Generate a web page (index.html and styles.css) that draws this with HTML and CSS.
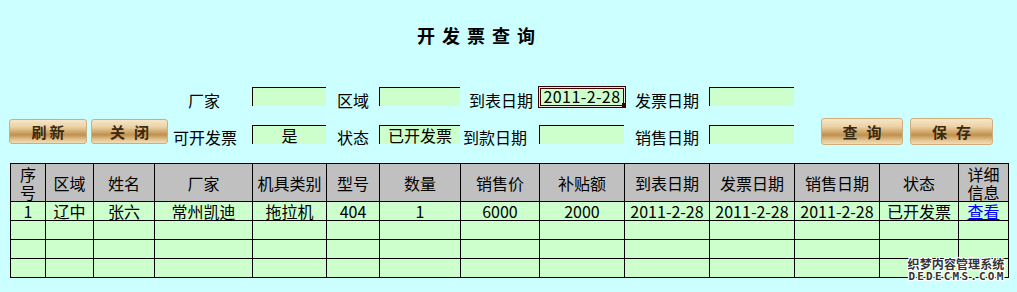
FILE: index.html
```html
<!DOCTYPE html>
<html lang="zh-CN">
<head>
<meta charset="utf-8">
<title>开发票查询</title>
<link rel="stylesheet" href="styles.css">
</head>
<body>
<div class="page">
  <h1 class="title">开发票查询</h1>
  <div class="form">
    <span class="lbl lbl-start lbl-a">厂家</span>
    <span class="field"></span>
    <span class="lbl lbl-c">区域</span>
    <span class="field"></span>
    <span class="lbl lbl-d">到表日期</span>
    <span class="field date">2011-2-28</span>
    <span class="lbl lbl-d">发票日期</span>
    <span class="field"></span>

    <div class="btns btns-left">
      <span class="btn btn-narrow w78">刷新</span>
      <span class="btn w77">关闭</span>
    </div>
    <span class="lbl lbl-b r2">可开发票</span>
    <span class="field">是</span>
    <span class="lbl lbl-c r2">状态</span>
    <span class="field">已开发票</span>
    <span class="lbl lbl-b r2">到款日期</span>
    <span class="field shift">&nbsp;</span>
    <span class="lbl lbl-d r2">销售日期</span>
    <span class="field"></span>
    <div class="btns btns-right">
      <span class="btn btn-tall w82">查询</span>
      <span class="btn btn-tall w83">保存</span>
    </div>
  </div>

  <table class="grid">
    <colgroup>
      <col class="c35"><col class="c48"><col class="c61"><col class="c98"><col class="c74">
      <col class="c53"><col class="c81"><col class="c79"><col class="c85"><col class="c85">
      <col class="c85"><col class="c85"><col class="c79"><col class="c50">
    </colgroup>
    <thead>
      <tr>
        <th>序<br>号</th><th>区域</th><th>姓名</th><th>厂家</th><th>机具类别</th>
        <th>型号</th><th>数量</th><th>销售价</th><th>补贴额</th><th>到表日期</th>
        <th>发票日期</th><th>销售日期</th><th>状态</th><th>详细<br>信息</th>
      </tr>
    </thead>
    <tbody>
      <tr>
        <td>1</td><td>辽中</td><td>张六</td><td>常州凯迪</td><td>拖拉机</td>
        <td>404</td><td>1</td><td>6000</td><td>2000</td><td>2011-2-28</td>
        <td>2011-2-28</td><td>2011-2-28</td><td>已开发票</td><td><a href="#" class="link">查看</a></td>
      </tr>
      <tr><td></td><td></td><td></td><td></td><td></td><td></td><td></td><td></td><td></td><td></td><td></td><td></td><td></td><td></td></tr>
      <tr><td></td><td></td><td></td><td></td><td></td><td></td><td></td><td></td><td></td><td></td><td></td><td></td><td></td><td></td></tr>
      <tr><td></td><td></td><td></td><td></td><td></td><td></td><td></td><td></td><td></td><td></td><td></td><td></td><td></td><td></td></tr>
    </tbody>
  </table>

  <div class="watermark">
    <div class="wm1">织梦内容管理系统</div>
    <div class="wm2">DEDECMS.COM</div>
  </div>
</div>
</body>
</html>
```

FILE: styles.css
```css
html, body {
  margin: 0;
  padding: 0;
}
body {
  background: #ccffff;
  font-family: "Noto Sans CJK SC", sans-serif;
  font-size: 16px;
  color: #000;
}
.page {
  position: relative;
  width: 1017px;
  height: 292px;
  overflow: hidden;
}
.title {
  margin: 26px 0 0 417px;
  font-size: 18px;
  line-height: 18px;
  font-weight: 700;
  letter-spacing: 7px;
}
.form {
  display: grid;
  grid-template-columns: 170px 82px 74px 53px 81px 78px 88px 83px 85px 223px;
  grid-template-rows: 22px 28px;
  row-gap: 10px;
  margin-top: 42px;
}
.lbl {
  align-self: end;
  justify-self: start;
  line-height: 16px;
  white-space: nowrap;
}
.lbl.r2 { margin-bottom: 1px; }
.lbl-start { grid-column: 2; }
.lbl-a { margin-left: 18px; }
.lbl-b { margin-left: 3px; }
.lbl-c { margin-left: 11px; }
.lbl-d { margin-left: 9px; }

.field {
  align-self: end;
  margin-bottom: 2px;
  height: 19px;
  box-sizing: border-box;
  background: #ccffcc;
  border-top: 1px solid #000;
  border-left: 1px solid #000;
  text-align: center;
  line-height: 18px;
  white-space: nowrap;
}
.field.shift {
  margin-left: 1px;
  width: 85px;
}
.field.date {
  position: relative;
  align-self: stretch;
  margin-bottom: 0;
  height: 22px;
  border: 1px solid #3c0000;
  box-shadow: inset 0 0 0 1px #f3e6e6, inset 0 0 0 2px #3c0000;
  line-height: 19px;
  letter-spacing: 0.4px;
}
.field.date::after {
  content: "";
  position: absolute;
  right: -1px;
  bottom: -1px;
  width: 4px;
  height: 5px;
  background: #3c0000;
}

.btns {
  display: flex;
  align-self: start;
}
.btns-left {
  grid-column: 1;
  gap: 4px;
  padding-left: 9px;
  margin-top: 1px;
}
.btns-right {
  gap: 7px;
  padding-left: 27px;
}
.btn {
  display: flex;
  align-items: center;
  justify-content: center;
  height: 25px;
  box-sizing: border-box;
  border: 1px solid #cfae7c;
  border-radius: 3px;
  background: linear-gradient(#f7e6c8 0%, #ecd2a6 30%, #c99c5c 58%, #bf904f 64%, #e4c692 86%, #f1ddb8 100%);
  font-size: 15px;
  font-weight: 700;
  color: #3b2a12;
  letter-spacing: 9px;
  text-indent: 9px;
}
.btn-narrow { letter-spacing: 3px; text-indent: 3px; }
.btn-tall { height: 27px; }
.w77 { width: 77px; }
.w78 { width: 78px; }
.w82 { width: 82px; }
.w83 { width: 83px; }

.grid {
  margin: 17px 0 0 10px;
  border-collapse: collapse;
  table-layout: fixed;
  width: 999px;
}
.c35 { width: 35px; }
.c48 { width: 48px; }
.c50 { width: 50px; }
.c53 { width: 53px; }
.c61 { width: 61px; }
.c74 { width: 74px; }
.c79 { width: 79px; }
.c81 { width: 81px; }
.c85 { width: 85px; }
.c98 { width: 98px; }
.grid th,
.grid td {
  border: 1px solid #000;
  padding: 0;
  text-align: center;
  white-space: nowrap;
  font-weight: 400;
}
.grid th {
  background: #c0c0c0;
  height: 37px;
  line-height: 18px;
}
.grid td {
  background: #ccffcc;
  height: 18px;
  line-height: 18px;
}
.link {
  color: #0000ff;
  text-decoration: underline;
}

.watermark {
  position: absolute;
  left: 906px;
  top: 256px;
  width: 100px;
  text-align: center;
  color: #333;
  font-weight: 700;
  text-shadow: 1px 0 0 #fff, -1px 0 0 #fff, 0 1px 0 #fff, 0 -1px 0 #fff, 1px 1px 0 #fff, -1px -1px 0 #fff, 1px -1px 0 #fff, -1px 1px 0 #fff;
}
.wm1 {
  font-size: 12px;
  line-height: 15px;
  letter-spacing: 0.1px;
}
.wm2 {
  font-family: "DejaVu Sans Mono", monospace;
  font-size: 11px;
  line-height: 11px;
  letter-spacing: 2.2px;
  text-indent: 2px;
}
```
